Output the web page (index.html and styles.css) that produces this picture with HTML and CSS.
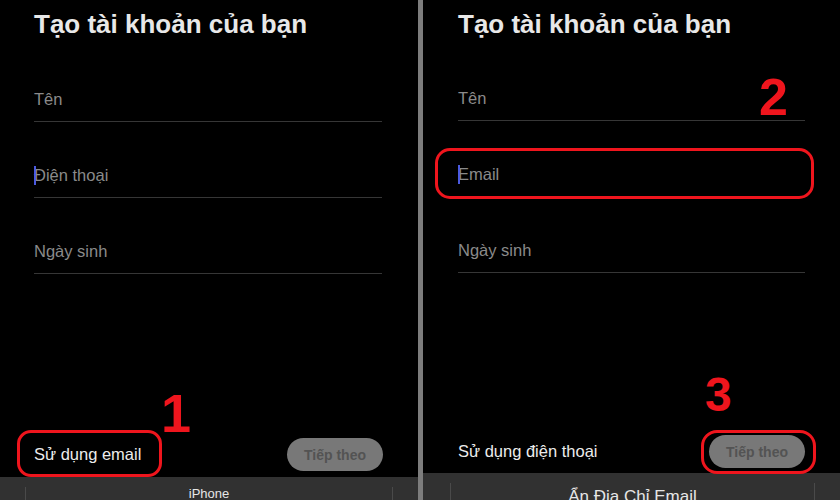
FILE: index.html
```html
<!DOCTYPE html>
<html lang="vi">
<head>
    <meta charset="UTF-8">
    <meta name="viewport" content="width=device-width, initial-scale=1.0">
    <title>Tạo tài khoản</title>
    <link rel="stylesheet" href="styles.css">
</head>
<body>
    <div class="screens">
        <!-- Step 1: phone form -->
        <div class="phone phone-left">
            <h1 class="title">Tạo tài khoản của bạn</h1>
            <div class="fields">
                <div class="field"><span class="placeholder">Tên</span></div>
                <div class="field"><span class="caret"></span><span class="placeholder">Điện thoại</span></div>
                <div class="field"><span class="placeholder">Ngày sinh</span></div>
            </div>
            <div class="footer">
                <span class="switch-link">Sử dụng email<span class="mark-box box-link"></span></span>
                <button class="next-btn">Tiếp theo</button>
            </div>
            <div class="keyboard-bar">
                <div class="bar-inner"><span class="bar-label">iPhone</span></div>
            </div>
            <span class="step step-1">1</span>
        </div>

        <div class="divider"></div>

        <!-- Step 2 & 3: email form -->
        <div class="phone phone-right">
            <h1 class="title">Tạo tài khoản của bạn</h1>
            <div class="fields">
                <div class="field"><span class="placeholder">Tên</span></div>
                <div class="field"><span class="caret"></span><span class="placeholder">Email</span><span class="mark-box box-email"></span></div>
                <div class="field"><span class="placeholder">Ngày sinh</span></div>
            </div>
            <div class="footer">
                <span class="switch-link">Sử dụng điện thoại</span>
                <button class="next-btn">Tiếp theo<span class="mark-box box-next"></span></button>
            </div>
            <div class="keyboard-bar">
                <div class="bar-inner"><span class="bar-label bar-label-big">Ẩn Địa Chỉ Email</span></div>
            </div>
            <span class="step step-2">2</span>
            <span class="step step-3">3</span>
        </div>
    </div>
</body>
</html>
```

FILE: styles.css
```css
:root {
    --red: #ef151d;
    --text: #e8e8e8;
    --muted: #8a8a8a;
    --line: #363636;
    --bar: #313131;
}
html, body {
    margin: 0;
    padding: 0;
    background: #000;
}
body {
    font-family: "Liberation Sans", Arial, sans-serif;
    color: var(--text);
    width: 840px;
    height: 500px;
    overflow: hidden;
}
.screens {
    display: flex;
    height: 500px;
}
.phone {
    position: relative;
    display: flex;
    flex-direction: column;
    background: #000;
    overflow: hidden;
}
.phone-left {
    width: 418px;
    padding: 8px 0 0 34px;
    box-sizing: border-box;
}
.phone-right {
    width: 417px;
    padding: 8px 0 0 35px;
    box-sizing: border-box;
}
.divider {
    width: 5px;
    background: #7d7d7d;
}
.title {
    margin: 0;
    font-size: 26px;
    line-height: 32px;
    font-weight: bold;
    color: var(--text);
}
.phone-left .fields {
    width: 348px;
}
.phone-right .fields {
    width: 347px;
    margin-top: -1px;
}
.field {
    position: relative;
    padding: 43px 0 12px;
    border-bottom: 1px solid var(--line);
    font-size: 16.5px;
    line-height: 20px;
}
.field:first-child {
    padding-top: 49px;
}
.placeholder {
    color: var(--muted);
}
.caret {
    position: absolute;
    left: 0;
    top: 44px;
    width: 2px;
    height: 19px;
    background: #4b5ae0;
}
.footer {
    margin-top: auto;
    display: flex;
    justify-content: space-between;
    align-items: center;
    height: 33px;
}
.phone-left .footer {
    width: 349px;
    margin-bottom: 6px;
}
.phone-right .footer {
    width: 347px;
    margin-bottom: 5px;
}
.switch-link {
    position: relative;
    font-size: 16.5px;
    color: #ececec;
}
.next-btn {
    position: relative;
    width: 96px;
    height: 33px;
    border: none;
    border-radius: 17px;
    background: #787878;
    color: #535353;
    font-family: inherit;
    font-size: 14px;
    font-weight: bold;
    padding: 0;
}
.keyboard-bar {
    height: 23px;
    background: var(--bar);
}
.phone-left .keyboard-bar {
    margin-left: -34px;
}
.phone-right .keyboard-bar {
    margin-left: -35px;
    height: 27px;
}
.bar-inner {
    height: 100%;
    margin: 0 25px;
    display: flex;
    justify-content: center;
    position: relative;
}
.phone-right .bar-inner {
    margin: 0 25px 0 27px;
}
.bar-inner::before,
.bar-inner::after {
    content: "";
    position: absolute;
    top: 10px;
    bottom: 0;
    width: 1px;
    background: #4a4a4a;
}
.bar-inner::before { left: 0; }
.bar-inner::after { right: 0; }
.bar-label {
    font-size: 13px;
    line-height: 13px;
    margin-top: 10px;
    color: #e6e6e6;
}
.bar-label-big {
    font-size: 17px;
    line-height: 17px;
    margin-top: 15px;
}

/* red annotations */
.mark-box {
    position: absolute;
    border: 3px solid var(--red);
    border-radius: 14px;
    box-sizing: border-box;
}
.box-link {
    left: -17px;
    top: -15px;
    width: 145px;
    height: 47px;
}
.box-email {
    left: -23px;
    top: 27px;
    width: 379px;
    height: 51px;
    border-radius: 15px;
}
.box-next {
    left: -8px;
    top: -5px;
    width: 115px;
    height: 44px;
    border-radius: 16px;
}
.step {
    position: absolute;
    color: var(--red);
    font-weight: bold;
    line-height: 1;
}
.step-1 {
    left: 161px;
    top: 386px;
    font-size: 54px;
}
.step-2 {
    left: 336px;
    top: 71px;
    font-size: 52px;
}
.step-3 {
    left: 282px;
    top: 371px;
    font-size: 48px;
}
```
